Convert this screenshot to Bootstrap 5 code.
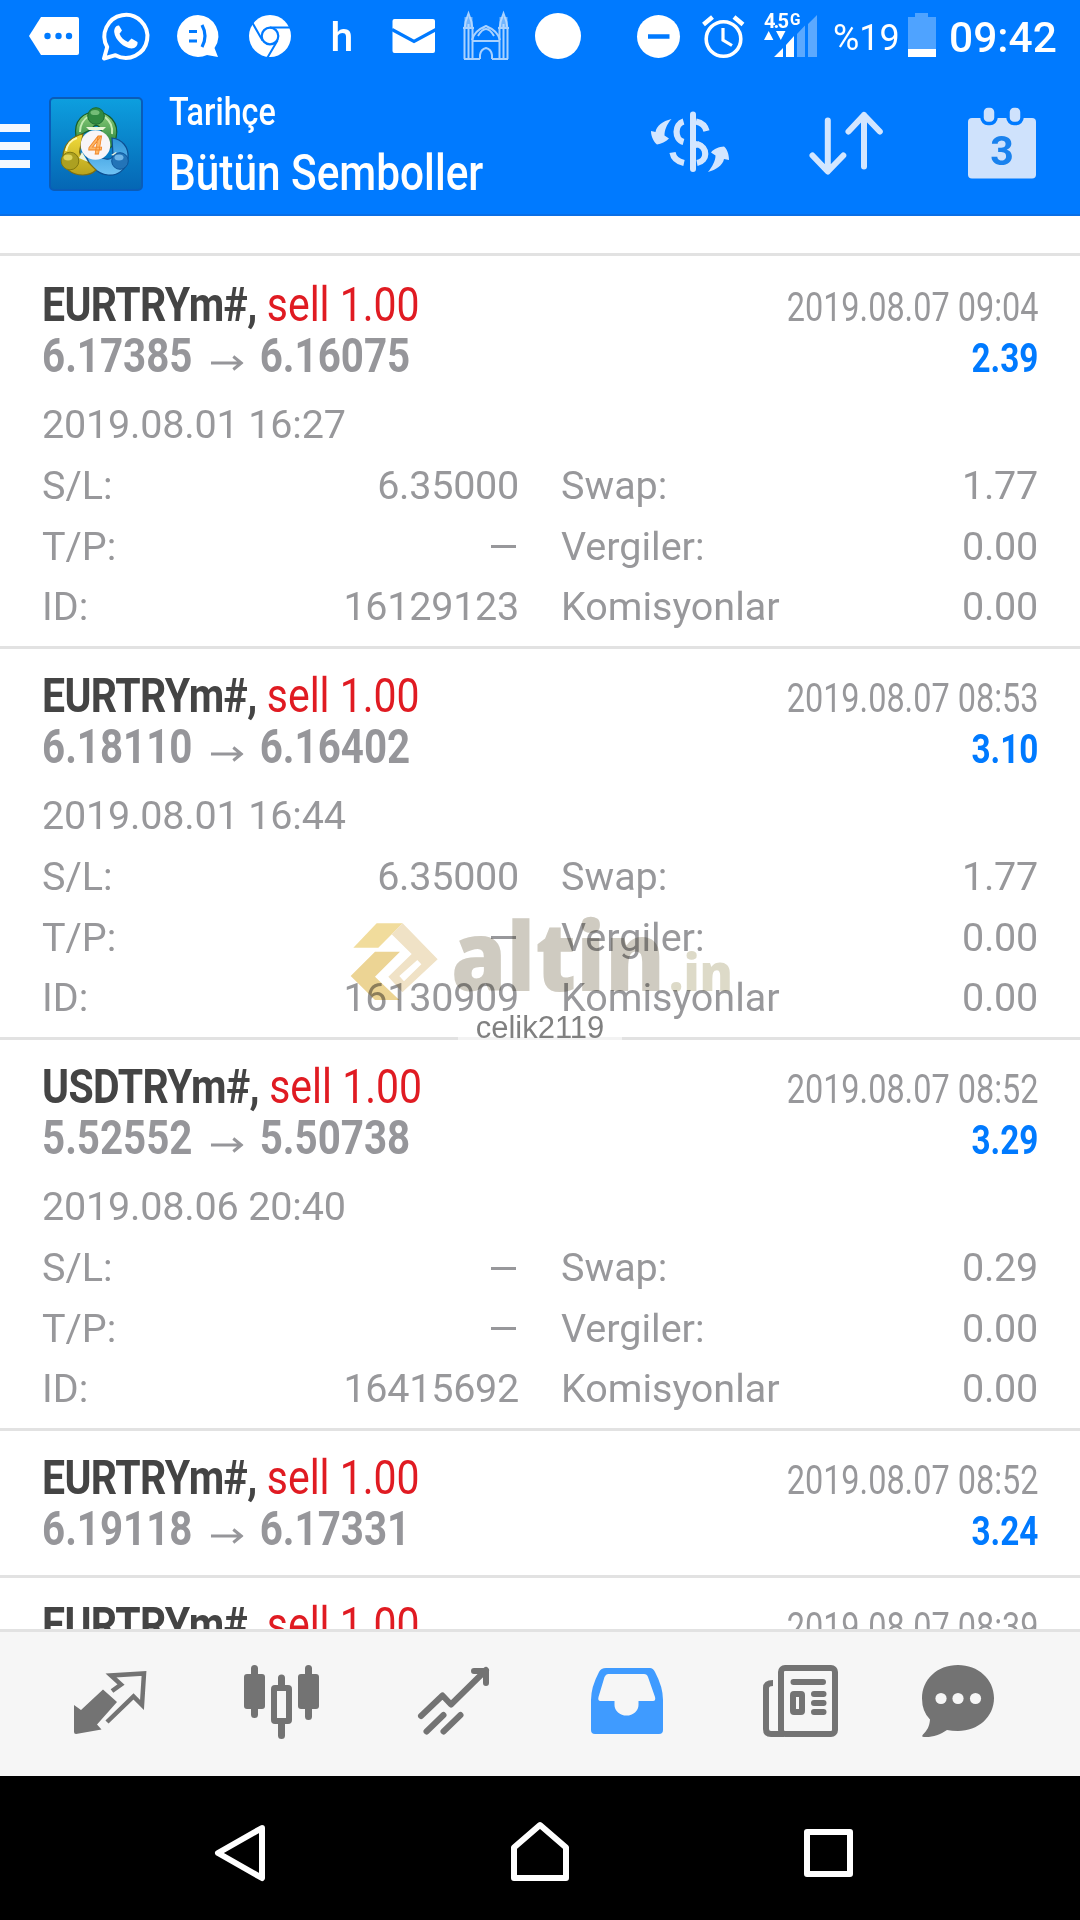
<!DOCTYPE html>
<html lang="tr">
<head>
<meta charset="utf-8">
<meta name="viewport" content="width=device-width, initial-scale=1">
<title>Tarihçe</title>
<link href="https://cdn.jsdelivr.net/npm/bootstrap@5.3.0/dist/css/bootstrap.min.css" rel="stylesheet">
<style>
body{width:1080px;height:1920px;font-family:Roboto,"Liberation Sans",sans-serif;background:#fff;color:#98989b;overflow:hidden}
svg{display:block;flex:none}
.topzone{background:#007aff;height:216px;border-bottom:2px solid #0a6fe6;color:#fff}
.statusbar{height:74px}
.notif-h{width:72px;font-size:41px;line-height:74px;font-weight:500}
.pct{font-size:37px;line-height:75px;width:67px;margin-left:14px;transform:scaleX(.97);transform-origin:left}
.clock{font-size:42.5px;font-weight:500;line-height:76px;margin-left:13px}
.appbar{height:140px}
.titles{margin-left:25px;width:380px;padding-top:15px}
.cond{display:inline-block;transform-origin:left center;white-space:nowrap}
.cond-end{transform-origin:right center}
.t-sub{font-size:38.5px;line-height:46px}
.t-sub .cond{transform:scaleX(.839);font-weight:500}
.t-main{font-size:50px;line-height:66px;margin-top:5px}
.t-main .cond{transform:scaleX(.847);font-weight:500}
.deals{min-height:0;padding-top:37px}
.deal{border-top:3px solid #e2e2e2;padding:22px 42px 0;height:391px}
.deal-first{padding-top:24px;height:393px}
.deal-short{height:147px}
.ln{height:51px;line-height:51px}
.ln:first-child{height:50px}
.sym{font-size:47.5px;transform:scaleX(.862)}
.sym b{color:#444;letter-spacing:-.7px}
.side{color:#e01b22}
.price{font-size:48px;font-weight:700;color:#96969a;transform:scaleX(.84)}
.price svg{display:inline-block;vertical-align:baseline;margin:0 19px 0 22px}
.when{font-size:40px;transform:scaleX(.811)}
.gain{font-size:40px;font-weight:700;color:#007aff;transform:scaleX(.832);padding-top:1px}
.details{font-size:39.5px;line-height:60.5px;margin-top:13.5px}
.opened{letter-spacing:-.18px;margin-bottom:1px}
.num{letter-spacing:-.25px}
.cell{width:477px}
.dash{width:25px;height:3px;background:#98989b;margin-right:3px}
.tabs{background:#f6f6f6;border-top:3px solid #e2e2e2;height:147px;padding-left:24px}
.sysnav{background:#000;height:144px}
.wmark{left:340px;top:900px;mix-blend-mode:multiply}
.wname{left:458px;top:1014px;width:164px;font:31px/28px "Liberation Sans",Arial,sans-serif;color:#808080;background:linear-gradient(transparent 21px,rgba(255,255,255,.6) 21px)}
</style>
</head>
<body class="d-flex flex-column position-relative m-0">

<header class="topzone flex-shrink-0">
  <div class="statusbar d-flex align-items-start">
    <svg width="72" height="74" viewBox="18 0 72 74" style="margin-left:18px"><path d="M41 17H77q2 0 2 2V53q0 2-2 2H41L29 36z" fill="#fff"/><g fill="#007aff"><circle cx="47.500" cy="36" r="3.200"/><circle cx="58.500" cy="36" r="3.200"/><circle cx="69" cy="36" r="3.200"/></g></svg>
    <svg width="72" height="74" viewBox="90 0 72 74"><path d="M104 58.500l3.200-11.500A21.500 21.500 0 1 1 115.500 55.200z" fill="none" stroke="#fff" stroke-width="4" stroke-linejoin="round"/><path d="M119 25.500c-3-.5-5 3-4.800 6.500C115 40 124 48 131.500 48.500c4 0 6.500-3 6-6.500l-6-3.500-3.500 3.500c-4-1.500-7-4.500-8.500-8.200l2.500-3.300z" fill="#fff"/></svg>
    <svg width="72" height="74" viewBox="162 0 72 74"><path d="M198 15a21 21 0 1 0 9 40l11 2-3.500-9A21 21 0 0 0 198 15z" fill="#fff"/><path d="M189 31.500h8M189 41h8M202 25q6 11 0 22" fill="none" stroke="#007aff" stroke-width="3.200"/></svg>
    <svg width="72" height="74" viewBox="234 0 72 74"><circle cx="270" cy="36" r="21" fill="#fff"/><circle cx="270" cy="36" r="8.300" fill="#fff" stroke="#007aff" stroke-width="2.200"/><path d="M270 27.400h20M262.500 40.500L252.500 23M277.500 40.500L267.500 57.500" stroke="#007aff" stroke-width="2" fill="none"/></svg>
    <div class="notif-h text-center">h</div>
    <svg width="72" height="74" viewBox="378 0 72 74"><rect x="392.500" y="19" width="42.500" height="34" rx="2" fill="#fff"/><path d="M392 29.500l22 12 22-12" fill="none" stroke="#007aff" stroke-width="3.200"/></svg>
    <svg width="72" height="74" viewBox="450 0 72 74"><g fill="none" stroke="#a9d2ff" stroke-width="2"><path d="M464.500 59V29l1-7 3-8.500 3 8.500 1 7v30M499.500 59V29l1-7 3-8.500 3 8.500 1 7v30M468.500 24v35M503.500 24v35M463 28h11M498 28h11M464 59h16M492 59h16"/><path d="M472 40q2-9 14-14q12 5 14 14M472 41h28M478 36q8-14 16 0M480 59v-4q1-6 6-7q5 1 6 7v4"/></g><path d="M464.500 17h8v10h-8zM499.500 17h8v10h-8z" fill="#bcdcff" opacity=".6"/></svg>
    <svg width="72" height="74" viewBox="522 0 72 74"><circle cx="558" cy="36" r="23" fill="#fff"/></svg>
    <svg width="64" height="74" viewBox="627 0 64 74" style="margin-left:33px"><circle cx="658.500" cy="36.500" r="21.500" fill="#fff"/><path d="M648 36.500h21.500" stroke="#007aff" stroke-width="4.500"/></svg>
    <svg width="66" height="74" viewBox="691 0 66 74"><g fill="none" stroke="#fff"><circle cx="723.500" cy="39" r="17.300" stroke-width="3.600"/><path d="M723 28v12l9 5.500" stroke-width="3.200"/><path d="M703.500 24.500l9-7.500M734 17l9 7.500" stroke-width="4.500"/></g></svg>
    <svg width="62" height="74" viewBox="757 0 62 74"><text x="764" y="28" fill="#fff" font-size="20" font-weight="700" textLength="25">4.5</text><text x="790" y="25" fill="#fff" font-size="16" font-weight="700" textLength="10.500" lengthAdjust="spacingAndGlyphs">G</text><path d="M764 40l4.700-9 4.700 9zM776 31h9.500l-4.700 9zM774 57l9-9v9zM786 45l8-9v21h-8z" fill="#fff"/><path d="M797 34l8-8.500V57h-8zM808 24l9-9V57h-9z" fill="#5ba9ff"/></svg>
    <div class="pct">%19</div>
    <svg width="28" height="74" viewBox="908 0 28 74" style="margin-left:8px"><path d="M915 13h13v4h8v40h-28V17h7z" fill="#4fa3ff"/><path d="M908 49h28v8h-28z" fill="#fff"/></svg>
    <div class="clock">09:42</div>
  </div>
  <div class="appbar d-flex">
    <svg width="144" height="140" viewBox="0 74 144 140">
      <defs>
        <linearGradient id="lg" x1="0" y1="0" x2="0" y2="1"><stop offset="0" stop-color="#0d9fdf"/><stop offset="1" stop-color="#0566b4"/></linearGradient>
        <linearGradient id="gg" x1="0" y1="0" x2="0" y2="1"><stop offset="0" stop-color="#8fd07a"/><stop offset="1" stop-color="#1b7a35"/></linearGradient>
        <linearGradient id="yg" x1="0" y1="0" x2="0" y2="1"><stop offset="0" stop-color="#f3dc3c"/><stop offset="1" stop-color="#b7a21c"/></linearGradient>
        <linearGradient id="bg" x1="0" y1="0" x2="0" y2="1"><stop offset="0" stop-color="#2f95d8"/><stop offset="1" stop-color="#6fc3f5"/></linearGradient>
      </defs>
      <path d="M0 124h30v8H0zM0 142h30v8H0zM0 160h30v8H0z" fill="#f3f8ff"/>
      <rect x="50" y="98" width="92" height="92" rx="4" fill="url(#lg)" stroke="#0a5cb8" stroke-width="2"/>
      <path d="M76 137c-3-17 8-25 20-25s24 10 20 26c-1 6-5 10-9 12l-6-20c-2-6-7-6-9-1z" fill="url(#gg)" stroke="#175c2a" stroke-width="1.200"/>
      <path d="M80 132c0-8 4-13 9-16M112 134c1-7-2-13-7-17" fill="none" stroke="#c5ecb4" stroke-width="2"/>
      <path d="M112 138c10 1 17 9 16 20-1 12-11 18-20 17-11-1-20-10-22-21l20 5q6 1 7-4z" fill="url(#bg)" stroke="#0d4f92" stroke-width="1.200"/>
      <path d="M83 134c-11 2-20 11-20 23 0 11 8 18 20 18 6 0 11-3 13-5l-11-11q-7-4-5-10z" fill="url(#yg)" stroke="#7c6d10" stroke-width="1.200"/>
      <path d="M66 151c1-6 5-11 11-13" fill="none" stroke="#fff7b0" stroke-width="2"/>
      <path d="M79 158l3-6 6 10zM111 155l5-3 3 5z" fill="#eef6e0"/>
      <path d="M86 127l3 3h14l3-3z" fill="#eaf6d8"/>
      <circle cx="96" cy="116" r="8.300" fill="#318a41" stroke="#1b6a30"/><ellipse cx="95" cy="112.500" rx="4.500" ry="2.600" fill="#74bd77"/>
      <circle cx="70" cy="161" r="8.800" fill="#aca021" stroke="#81780f"/><ellipse cx="68" cy="157.500" rx="4.500" ry="3" fill="#ded45c"/>
      <circle cx="120" cy="161" r="8.300" fill="#2374b8" stroke="#0d549a"/><ellipse cx="119" cy="157.500" rx="4.500" ry="3" fill="#6fb5e8"/>
      <circle cx="95.500" cy="145" r="14.800" fill="#f8f5f8"/>
      <text x="95.500" y="154" text-anchor="middle" font-size="25" font-weight="700" fill="#ffb866" stroke="#f08427" stroke-width=".8" font-style="italic">4</text>
    </svg>
    <div class="titles">
      <div class="t-sub"><span class="cond">Tarihçe</span></div>
      <div class="t-main"><span class="cond">Bütün Semboller</span></div>
    </div>
    <svg width="200" height="140" viewBox="600 74 200 140" style="margin-left:51px"><g fill="none" stroke="#d3e6ff"><path d="M693 114.500v54.500" stroke-width="6" stroke-linecap="round"/><path d="M683.500 121.500c-9 2.500-9.500 18 0 20.500M672.500 152.500c1 6 4.500 9 11.500 10.500M696 121.500c7 1.500 9.500 5 10.500 9.500M697 144c11 3 11 17 0 19" stroke-width="6.200"/></g><path d="M696 141c4 1 6 2 8 4l-8 3z" fill="#d3e6ff"/><path d="M671.500 119c-9 2-15 7-16 13l-4.500-1c0 6 3 11 6 13.500 4-.5 9-3 12-6l-4.500-3c0-5 2-11 7-16.500zM708 172c8-2 15-7 16-13l5 1c0-6-2-11-5-13.500-5 .5-10 2-13 6l4.500 3c0 5-3 11-7.500 16.500z" fill="#d3e6ff"/></svg>
    <svg width="140" height="140" viewBox="800 74 140 140"><path d="M827.800 120.500v50.500M812.500 155.500l15.300 16 15.500-16M864 166.500V115M848.500 131.500L864 115l15.800 16.500" fill="none" stroke="#d3e6ff" stroke-width="6" stroke-linecap="round" stroke-linejoin="round"/></svg>
    <svg width="140" height="140" viewBox="940 74 140 140"><rect x="968" y="118" width="68" height="60.500" rx="4" fill="#cfe2fc"/><g fill="#cfe2fc" stroke="#007aff" stroke-width="3.500"><rect x="982" y="106" width="14" height="17.500" rx="6"/><rect x="1008" y="106" width="14" height="17.500" rx="6"/></g><text x="1002" y="164.500" text-anchor="middle" font-size="41" font-weight="700" fill="#1a82ee">3</text></svg>
  </div>
</header>

<main class="deals flex-fill overflow-hidden">
  <section class="deal deal-first">
    <div class="ln d-flex justify-content-between align-items-baseline"><span class="cond sym"><b>EURTRYm#,</b> <span class="side">sell 1.00</span></span><span class="cond cond-end when">2019.08.07 09:04</span></div>
    <div class="ln d-flex justify-content-between align-items-baseline"><span class="cond price">6.17385<svg width="39" height="20" viewBox="0 0 35 20" preserveAspectRatio="none"><path d="M0 11h31M24 4.500l8.500 6.500L24 17.500" fill="none" stroke="#96969a" stroke-width="3.200"/></svg>6.16075</span><span class="cond cond-end gain">2.39</span></div>
    <div class="details">
      <div class="opened">2019.08.01 16:27</div>
      <div class="d-flex justify-content-between"><div class="cell d-flex justify-content-between"><span>S/L:</span><span class="num">6.35000</span></div><div class="cell d-flex justify-content-between"><span>Swap:</span><span class="num">1.77</span></div></div>
      <div class="d-flex justify-content-between"><div class="cell d-flex justify-content-between align-items-center"><span>T/P:</span><span class="dash"></span></div><div class="cell d-flex justify-content-between"><span>Vergiler:</span><span class="num">0.00</span></div></div>
      <div class="d-flex justify-content-between"><div class="cell d-flex justify-content-between"><span>ID:</span><span class="num">16129123</span></div><div class="cell d-flex justify-content-between"><span>Komisyonlar</span><span class="num">0.00</span></div></div>
    </div>
  </section>
  <section class="deal">
    <div class="ln d-flex justify-content-between align-items-baseline"><span class="cond sym"><b>EURTRYm#,</b> <span class="side">sell 1.00</span></span><span class="cond cond-end when">2019.08.07 08:53</span></div>
    <div class="ln d-flex justify-content-between align-items-baseline"><span class="cond price">6.18110<svg width="39" height="20" viewBox="0 0 35 20" preserveAspectRatio="none"><path d="M0 11h31M24 4.500l8.500 6.500L24 17.500" fill="none" stroke="#96969a" stroke-width="3.200"/></svg>6.16402</span><span class="cond cond-end gain">3.10</span></div>
    <div class="details">
      <div class="opened">2019.08.01 16:44</div>
      <div class="d-flex justify-content-between"><div class="cell d-flex justify-content-between"><span>S/L:</span><span class="num">6.35000</span></div><div class="cell d-flex justify-content-between"><span>Swap:</span><span class="num">1.77</span></div></div>
      <div class="d-flex justify-content-between"><div class="cell d-flex justify-content-between align-items-center"><span>T/P:</span><span class="dash"></span></div><div class="cell d-flex justify-content-between"><span>Vergiler:</span><span class="num">0.00</span></div></div>
      <div class="d-flex justify-content-between"><div class="cell d-flex justify-content-between"><span>ID:</span><span class="num">16130909</span></div><div class="cell d-flex justify-content-between"><span>Komisyonlar</span><span class="num">0.00</span></div></div>
    </div>
  </section>
  <section class="deal">
    <div class="ln d-flex justify-content-between align-items-baseline"><span class="cond sym"><b>USDTRYm#,</b> <span class="side">sell 1.00</span></span><span class="cond cond-end when">2019.08.07 08:52</span></div>
    <div class="ln d-flex justify-content-between align-items-baseline"><span class="cond price">5.52552<svg width="39" height="20" viewBox="0 0 35 20" preserveAspectRatio="none"><path d="M0 11h31M24 4.500l8.500 6.500L24 17.500" fill="none" stroke="#96969a" stroke-width="3.200"/></svg>5.50738</span><span class="cond cond-end gain">3.29</span></div>
    <div class="details">
      <div class="opened">2019.08.06 20:40</div>
      <div class="d-flex justify-content-between"><div class="cell d-flex justify-content-between align-items-center"><span>S/L:</span><span class="dash"></span></div><div class="cell d-flex justify-content-between"><span>Swap:</span><span class="num">0.29</span></div></div>
      <div class="d-flex justify-content-between"><div class="cell d-flex justify-content-between align-items-center"><span>T/P:</span><span class="dash"></span></div><div class="cell d-flex justify-content-between"><span>Vergiler:</span><span class="num">0.00</span></div></div>
      <div class="d-flex justify-content-between"><div class="cell d-flex justify-content-between"><span>ID:</span><span class="num">16415692</span></div><div class="cell d-flex justify-content-between"><span>Komisyonlar</span><span class="num">0.00</span></div></div>
    </div>
  </section>
  <section class="deal deal-short">
    <div class="ln d-flex justify-content-between align-items-baseline"><span class="cond sym"><b>EURTRYm#,</b> <span class="side">sell 1.00</span></span><span class="cond cond-end when">2019.08.07 08:52</span></div>
    <div class="ln d-flex justify-content-between align-items-baseline"><span class="cond price">6.19118<svg width="39" height="20" viewBox="0 0 35 20" preserveAspectRatio="none"><path d="M0 11h31M24 4.500l8.500 6.500L24 17.500" fill="none" stroke="#96969a" stroke-width="3.200"/></svg>6.17331</span><span class="cond cond-end gain">3.24</span></div>
  </section>
  <section class="deal deal-short">
    <div class="ln d-flex justify-content-between align-items-baseline"><span class="cond sym"><b>EURTRYm#,</b> <span class="side">sell 1.00</span></span><span class="cond cond-end when">2019.08.07 08:39</span></div>
  </section>
</main>

<nav class="tabs d-flex flex-shrink-0">
  <svg width="172" height="144" viewBox="24 1632 172 144"><path d="M103 1689.500L117 1702 97 1724.500l4.500 5L76 1734q-2 0-2-2V1705l7 5z" fill="#737373"/><path d="M112 1691l9-6.500-10-9L144 1673.500l-2 31.500-8.500-8.500L107 1722" fill="none" stroke="#737373" stroke-width="4.500"/></svg>
  <svg width="172" height="144" viewBox="196 1632 172 144"><g fill="#737373"><rect x="244" y="1674" width="21" height="35" rx="3"/><rect x="298" y="1674" width="21" height="35" rx="3"/></g><path d="M254.500 1668.500v46M308.500 1668.500v48M281.500 1678v10M281.500 1724v11.500" stroke="#737373" stroke-width="7" stroke-linecap="round"/><rect x="274" y="1688" width="15" height="33" rx="1" fill="#f6f6f6" stroke="#737373" stroke-width="6"/></svg>
  <svg width="172" height="144" viewBox="368 1632 172 144"><path d="M421 1716l21.500-20.500 8.500 9L486 1670M474 1671h12v12M426.500 1731.500l17-16.500M443.500 1731.500l17-16.500" fill="none" stroke="#737373" stroke-width="6" stroke-linecap="round" stroke-linejoin="round"/></svg>
  <svg width="172" height="144" viewBox="540 1632 172 144"><path d="M606 1668H650q3 0 5 4 8 15 8 28V1730q0 4-4 4H595q-4 0-4-4V1700q0-13 8-28 2-4 7-4zM608 1674q-2 0-3.500 3L598.500 1697q-1 4 2 4H614.500v4a12 10.500 0 0 0 24 0v-4H653q3 0 2-4L648 1677q-1-3-4-3z" fill="#3f9bff" fill-rule="evenodd"/></svg>
  <svg width="172" height="144" viewBox="712 1632 172 144"><g fill="none" stroke="#737373" stroke-width="6"><rect x="781" y="1668" width="54" height="66" rx="4"/><path d="M773 1683q-7 0-7 5V1729q0 5 5 5H784"/><path d="M793.500 1682H823M814 1694h9.500M814 1703h9.500M814 1712h9.500" stroke-linecap="round"/><rect x="793" y="1694" width="9" height="18" rx="1"/></g></svg>
  <svg width="172" height="144" viewBox="884 1632 172 144"><path d="M958 1665c20 0 36 14 36 33s-16 33-36 33q-6 0-11-1c-7 5-15 7.500-23 7q-3 0-1-2.500c4-4 6.500-8 7-15q-8-8-8-21c0-19 15-33.500 36-33.500z" fill="#737373"/><g fill="#f6f6f6"><circle cx="941" cy="1698.500" r="5.600"/><circle cx="958" cy="1698.500" r="5.600"/><circle cx="975.500" cy="1698.500" r="5.600"/></g></svg>
</nav>

<footer class="sysnav d-flex justify-content-center flex-shrink-0">
  <svg width="290" height="144" viewBox="105 1776 290 144"><path d="M262 1828L218 1853l44 25z" fill="none" stroke="#fff" stroke-width="6" stroke-linejoin="round"/></svg>
  <svg width="290" height="144" viewBox="395 1776 290 144"><path d="M514 1847.500L540 1825l26 22.500V1878H514z" fill="none" stroke="#fff" stroke-width="6" stroke-linejoin="round"/></svg>
  <svg width="290" height="144" viewBox="685 1776 290 144"><rect x="807" y="1832" width="43" height="42" fill="none" stroke="#fff" stroke-width="6" stroke-linejoin="round"/></svg>
</footer>

<svg class="wmark position-absolute" width="410" height="110" viewBox="340 900 410 110" font-family="Open Sans, Noto Sans, sans-serif" font-weight="800">
  <g transform="translate(320 880) scale(.33333)">
    <path d="M170 130h78l-73 73h-75z" fill="#f1dc9c"/>
    <path d="M165 215h75l-75 75 73 70h-73L92 288z" fill="#ecd494"/>
    <path d="M248 130L353 238 247 337 205 290 275 222 215 163zM292 240L238 288 252 304 304 253z" fill="#f0e2c6" fill-rule="evenodd"/>
  </g>
  <text x="451" y="991" font-size="95" fill="#cfcbc1" textLength="214" lengthAdjust="spacingAndGlyphs">altin</text>
  <text x="669" y="991" font-size="51" fill="#dddac8" textLength="64" lengthAdjust="spacingAndGlyphs">.in</text>
</svg>
<div class="wname position-absolute text-center">celik2119</div>

<script src="https://cdn.jsdelivr.net/npm/bootstrap@5.3.0/dist/js/bootstrap.bundle.min.js"></script>
</body>
</html>
